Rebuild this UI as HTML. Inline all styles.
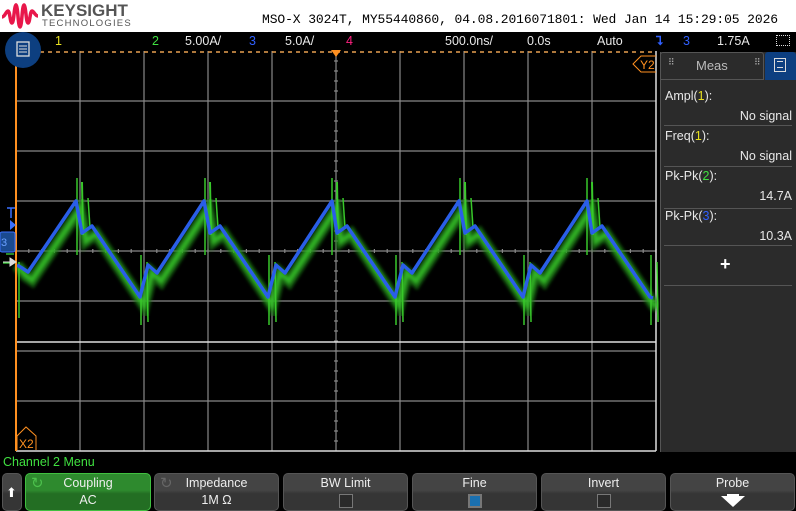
<!DOCTYPE html>
<html><head><meta charset="utf-8"><style>
*{margin:0;padding:0;box-sizing:border-box}
body{width:796px;height:511px;background:#000;overflow:hidden;font-family:"Liberation Sans",sans-serif;position:relative}
.a{position:absolute;white-space:nowrap}
.st{font-size:12.5px;color:#e8e8e8;top:34px}
.mono{font-family:"Liberation Mono",monospace}
.mi{position:absolute;left:665px;font-size:12.5px;color:#e8e8e8}
.mv{position:absolute;right:4px;font-size:12.5px;color:#e8e8e8}
.sep{position:absolute;left:664px;width:128px;height:1px;background:#555}
.sk{position:absolute;top:473px;height:38px;border:1px solid #555;border-radius:5px;background:linear-gradient(#444 0,#444 45%,#353535 55%,#353535 100%);color:#eee;font-size:12.5px;text-align:center}
.sk .t{position:absolute;top:2px;width:100%}
.sk .b{position:absolute;top:19px;width:100%}
.cb{position:absolute;left:50%;margin-left:-7px;top:20px;width:14px;height:14px;border:1px solid #777;background:#2a2a2a}
</style></head><body>
<div class="a" style="left:0;top:0;width:796px;height:32px;background:#fff"></div>
<svg class="a" style="left:2px;top:3px" width="36" height="26" viewBox="0 0 36 26"><path d="M0 14 C3 14 4 8 6 8 C8 8 8 20 10 20 C12 20 12 3 14 2 C16 3 16 24 18 24 C20 24 20 2 22 2 C24 3 24 20 26 20 C28 20 28 8 30 8 C32 8 33 13 36 13" fill="none" stroke="#e8174a" stroke-width="3.5"/></svg>
<div class="a" style="left:41px;top:1px;font-size:17px;font-weight:bold;color:#555">KEYSIGHT</div>
<div class="a" style="left:42px;top:18px;font-size:9.5px;color:#555;letter-spacing:1.2px">TECHNOLOGIES</div>
<div class="a mono" style="left:262px;top:12px;font-size:13px;color:#000;letter-spacing:-0.1px">MSO-X 3024T, MY55440860, 04.08.2016071801: Wed Jan 14 15:29:05 2026</div>

<div class="a st" style="left:55px;color:#e8e020">1</div>
<div class="a st" style="left:152px;color:#40e040">2</div>
<div class="a st" style="left:185px">5.00A/</div>
<div class="a st" style="left:249px;color:#3060ff">3</div>
<div class="a st" style="left:285px">5.0A/</div>
<div class="a st" style="left:346px;color:#ff2080">4</div>
<div class="a st" style="left:445px">500.0ns/</div>
<div class="a st" style="left:527px">0.0s</div>
<div class="a st" style="left:597px">Auto</div>
<div class="a st" style="left:656px;color:#3060ff;font-weight:bold">⮧</div>
<div class="a st" style="left:683px;color:#3060ff">3</div>
<div class="a st" style="left:717px">1.75A</div>
<div class="a" style="left:776px;top:35px;width:14px;height:11px;border:1px dotted #ddd"></div>

<svg class="a" style="left:0;top:0" width="796" height="511" id="sv">
<defs><filter id="bl"><feGaussianBlur stdDeviation="1.5"/></filter></defs>
<g id="grid" stroke="#888" stroke-width="1.2"></g>
<line x1="16" y1="342" x2="656" y2="342" stroke="#ddd" stroke-width="1.5"/>
<line x1="16" y1="451" x2="656" y2="451" stroke="#ddd" stroke-width="1.5"/>
<line x1="16" y1="52" x2="656" y2="52" stroke="#e8a050" stroke-width="1.5" stroke-dasharray="4 4"/>
<line x1="656" y1="51" x2="656" y2="451" stroke="#ddd" stroke-width="1.5"/>
<g id="green"></g>
<path id="blue" fill="none" stroke="#2a5ee8" stroke-width="3.5" stroke-linejoin="round"/>
<line x1="16" y1="50" x2="16" y2="451" stroke="#ff9020" stroke-width="2"/>
<path d="M331 50 L341 50 L336 57Z" fill="#ff9020"/>
<path d="M656 56 L641 56 L633 64 L641 72 L656 72" fill="none" stroke="#ff9020"/>
<text x="640" y="69" font-family="Liberation Sans" font-size="12" fill="#ff9020">Y2</text>
<path d="M17 450 L17 436 L26 427 L36 436 L36 450" fill="none" stroke="#ff9020"/>
<text x="19" y="448" font-family="Liberation Sans" font-size="12" fill="#ff9020">X2</text>
<path d="M7 208 H15 M11 208 V218" stroke="#3a70ff" stroke-width="1.5"/>
<path d="M10 220 L16 225 L10 230Z" fill="#3a70ff"/>
<rect x="0" y="232" width="15" height="20" rx="2" fill="#1a4a90" stroke="#3a70ff"/>
<text x="1" y="246" font-family="Liberation Sans" font-size="11" fill="#6aa0ff">3</text>
<path d="M6 254 H14 M3 263 H12 L12 259" stroke="#40e040" stroke-width="1.2" fill="none"/>
<path d="M3 262 H10 M10 258 L16 262 L10 266Z" fill="#ddd" stroke="#ddd"/>
<circle cx="23" cy="50" r="18" fill="#0d3f80"/>
<rect x="17" y="42" width="12" height="14" fill="none" stroke="#ddd" stroke-width="1.3"/>
<path d="M19 46 H27 M19 49 H27 M19 52 H27" stroke="#ddd"/>
</svg>

<div class="a" style="left:660px;top:52px;width:136px;height:400px;background:#2b2b2b;border-left:1px solid #555"></div>
<div class="a" style="left:660px;top:52px;width:104px;height:28px;background:#2b2b2b;border:1px solid #555;border-radius:3px 3px 0 0"></div>
<div class="a" style="left:696px;top:58px;font-size:13px;color:#bbb">Meas</div>
<div class="a" style="left:668px;top:57px;font-size:9px;color:#aaa">⠿</div>
<div class="a" style="left:754px;top:57px;font-size:9px;color:#aaa">⠿</div>
<div class="a" style="left:765px;top:52px;width:31px;height:28px;background:#0d3f80;border-radius:3px 3px 0 0"></div>
<div class="a" style="left:774px;top:58px;width:12px;height:14px;border:1.3px solid #ddd"></div>
<div class="a" style="left:777px;top:61px;width:6px;height:7px;border-top:1px solid #ddd;border-bottom:1px solid #ddd"></div>
<div class="mi" style="top:89px">Ampl(<span style="color:#e8e020">1</span>):</div>
<div class="mv" style="top:109px">No signal</div><div class="sep" style="top:125px"></div>
<div class="mi" style="top:129px">Freq(<span style="color:#e8e020">1</span>):</div>
<div class="mv" style="top:149px">No signal</div><div class="sep" style="top:166px"></div>
<div class="mi" style="top:169px">Pk-Pk(<span style="color:#40e040">2</span>):</div>
<div class="mv" style="top:189px">14.7A</div><div class="sep" style="top:208px"></div>
<div class="mi" style="top:209px">Pk-Pk(<span style="color:#3060ff">3</span>):</div>
<div class="mv" style="top:229px">10.3A</div><div class="sep" style="top:245px"></div>
<div class="a" style="left:720px;top:254px;font-size:18px;font-weight:bold;color:#fff">+</div>
<div class="sep" style="top:285px"></div>

<div class="a" style="left:3px;top:455px;font-size:12.5px;color:#40e040">Channel 2 Menu</div>
<div class="sk" style="left:2px;width:20px"><div style="position:absolute;top:11px;left:3px;color:#fff;font-size:13px">⬆</div></div>
<div class="sk" style="left:25px;width:126px;background:linear-gradient(#2e8a2e 0,#2e8a2e 45%,#236e23 55%,#236e23 100%);border-color:#40c040"><div style="position:absolute;left:5px;top:0;color:#4cc04c;font-size:15px">↻</div><div class="t">Coupling</div><div class="b">AC</div></div>
<div class="sk" style="left:154px;width:125px"><div style="position:absolute;left:5px;top:0;color:#666;font-size:15px">↻</div><div class="t">Impedance</div><div class="b">1M Ω</div></div>
<div class="sk" style="left:283px;width:125px"><div class="t">BW Limit</div><div class="cb"></div></div>
<div class="sk" style="left:412px;width:125px"><div class="t">Fine</div><div class="cb" style="background:#1a70b0;border:2px solid #777"></div></div>
<div class="sk" style="left:541px;width:125px"><div class="t">Invert</div><div class="cb"></div></div>
<div class="sk" style="left:670px;width:125px"><div class="t">Probe</div><div style="position:absolute;left:50%;margin-left:-12px;top:22px;width:0;height:0;border-left:12px solid transparent;border-right:12px solid transparent;border-top:11px solid #fff"></div><div style="position:absolute;left:50%;margin-left:-6px;top:20px;width:12px;height:4px;background:#fff"></div></div>

<script>
var NS="http://www.w3.org/2000/svg",g=document.getElementById("grid");
function ln(p,x1,y1,x2,y2,c,w){var l=document.createElementNS(NS,"line");l.setAttribute("x1",x1);l.setAttribute("y1",y1);l.setAttribute("x2",x2);l.setAttribute("y2",y2);if(c)l.setAttribute("stroke",c);if(w)l.setAttribute("stroke-width",w);p.appendChild(l);return l;}
for(var x=80;x<656;x+=64)ln(g,x,51,x,451);
for(var y=101;y<451;y+=50)ln(g,16,y,656,y);
for(var x=16;x<656;x+=12.8)ln(g,x,249,x,253);
for(var y=51;y<451;y+=10)ln(g,334,y,338,y);
var pk=[76,204,331,459,586];
var d="M17 265 L22 268 L28 272 L76 201";
for(var i=0;i<pk.length;i++){var p=pk[i];var seg=[[p+6,233],[p+16,226],[p+64,297],[p+72,265],[p+81,273],[p+128,201]];seg.forEach(function(q){if(q[0]<=653)d+=" L"+q[0]+" "+q[1];});}
d+=" L653 298";
document.getElementById("blue").setAttribute("d",d);
var gr=document.getElementById("green");
var gp=document.createElementNS(NS,"path");
var d2=d.replace(/L(\d+) (\d+)/g,function(m,a,b){return "L"+(+a+4)+" "+(+b+8);});
gp.setAttribute("d",d2);gp.setAttribute("fill","none");gp.setAttribute("stroke","#1e7a18");gp.setAttribute("stroke-width","12");gp.setAttribute("opacity","0.75");gp.setAttribute("filter","url(#bl)");gr.appendChild(gp);
var gp2=gp.cloneNode();gp2.setAttribute("stroke","#38c82a");gp2.setAttribute("stroke-width","5");gp2.setAttribute("opacity","0.8");gr.appendChild(gp2);
pk.forEach(function(p){
 if(p+2<656){ln(gr,p+1,178,p+1,255,"#38c82a",1.5);ln(gr,p+6,182,p+7,235,"#38c82a",2);ln(gr,p+12,198,p+14,228,"#38c82a",1.5);}
 var t=p+64;if(t<656){ln(gr,t+1,255,t+1,325,"#38c82a",1.5);ln(gr,t+7,262,t+8,322,"#38c82a",1.5);}
});
ln(gr,19,262,19,318,"#38c82a",1.5);
</script>
</body></html>
